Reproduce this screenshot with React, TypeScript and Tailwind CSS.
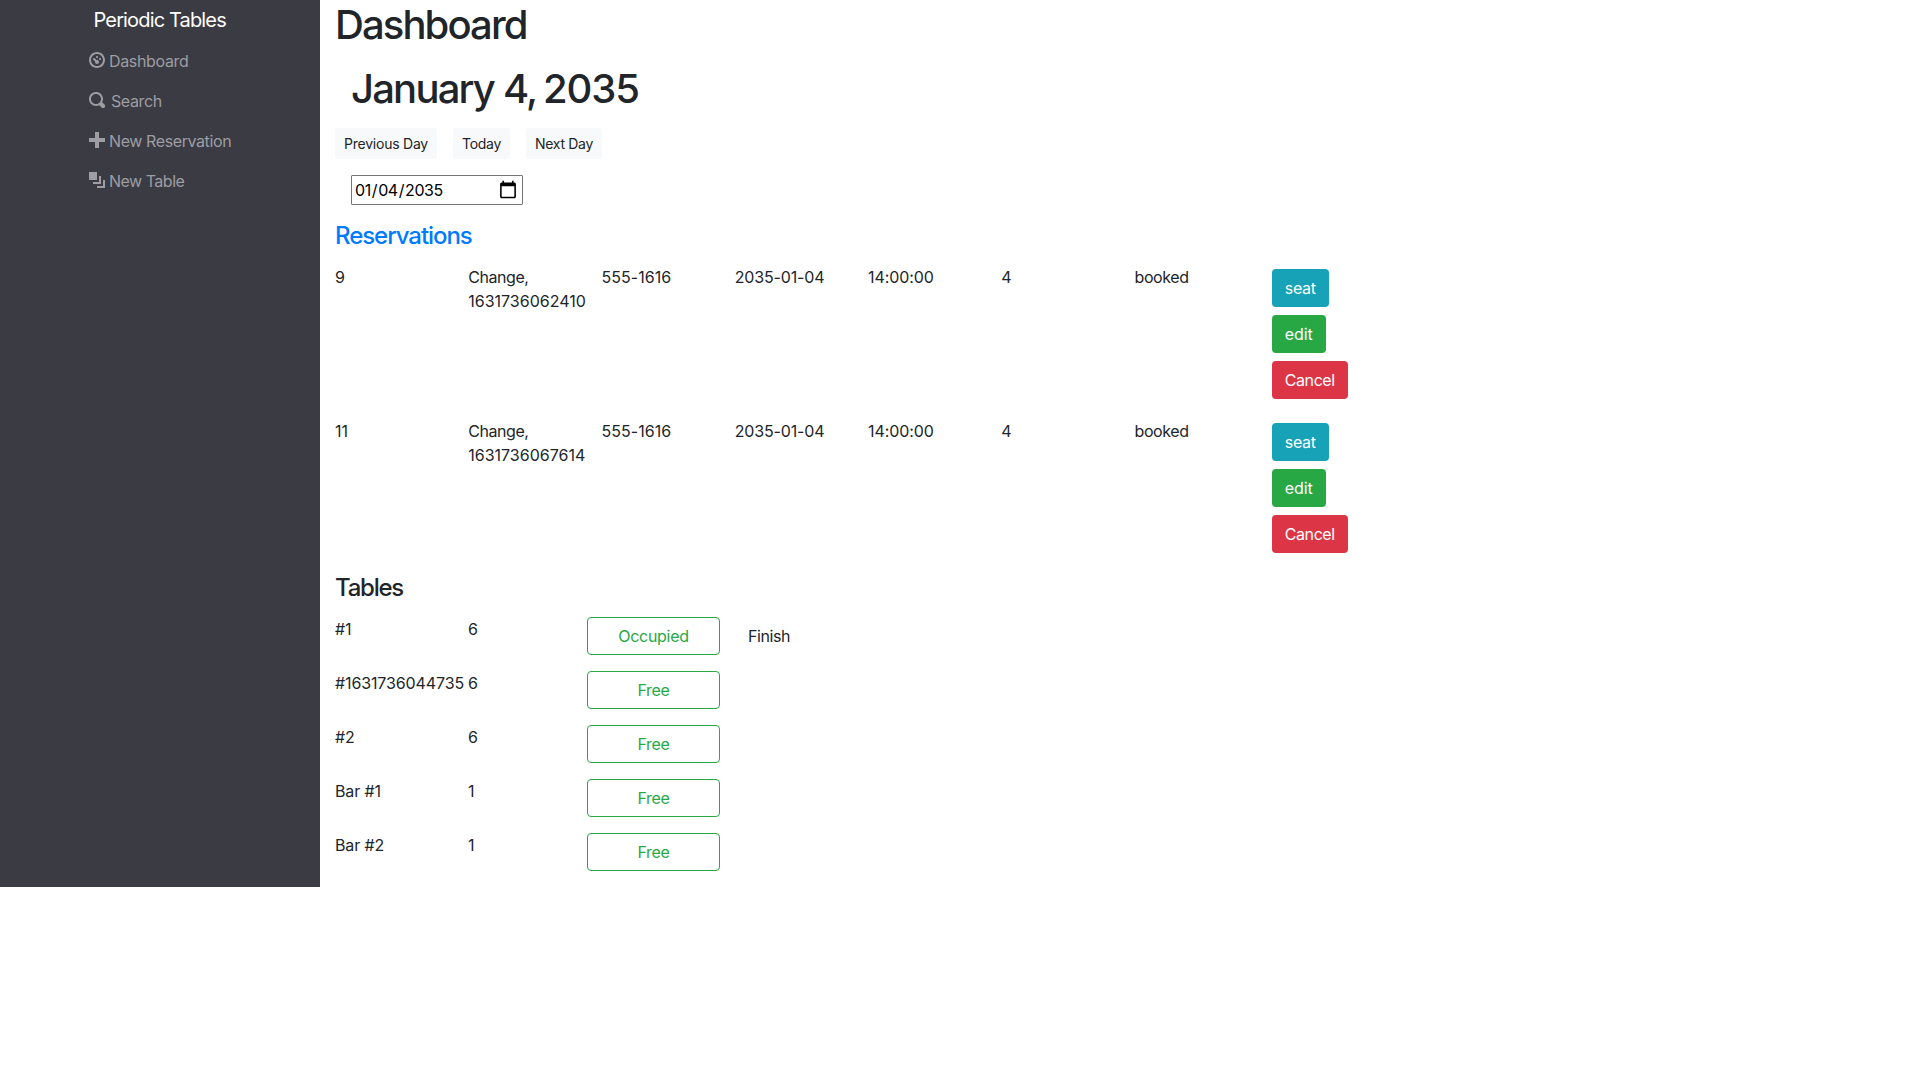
const NAV = [
  {
    label: "Dashboard",
    text: "ml-1 tracking-[-0.34px]",
    d: "M4 0c-2.2 0-4 1.8-4 4s1.8 4 4 4 4-1.8 4-4-1.8-4-4-4zm0 1c1.66 0 3 1.34 3 3s-1.34 3-3 3-3-1.34-3-3 1.34-3 3-3zm0 1c-.28 0-.5.22-.5.5s.22.5.5.5.5-.22.5-.5-.22-.5-.5-.5zm-1.66 1a.5.5 0 0 0-.19.84l.91.91c-.02.08-.06.16-.06.25 0 .55.45 1 1 1s1-.45 1-1-.45-1-1-1c-.09 0-.17.04-.25.06l-.91-.91a.5.5 0 0 0-.44-.16zm3.16 0c-.28 0-.5.22-.5.5s.22.5.5.5.5-.22.5-.5-.22-.5-.5-.5z",
  },
  {
    label: "Search",
    text: "ml-1.5 tracking-[-0.4px]",
    d: "M3.5 0c-1.93 0-3.5 1.57-3.5 3.5s1.57 3.5 3.5 3.5c.59 0 1.17-.14 1.66-.41a1 1 0 0 0 .13.13l1 1a1.02 1.02 0 1 0 1.44-1.44l-1-1a1 1 0 0 0-.16-.13c.27-.49.44-1.06.44-1.66 0-1.93-1.55-3.5-3.5-3.5zm0 1c1.39 0 2.5 1.11 2.5 2.5 0 .66-.24 1.27-.66 1.72-.01.01-.02.02-.03.03a1 1 0 0 0-.13.13c-.44.4-1.04.63-1.69.63-1.39 0-2.5-1.11-2.5-2.5s1.11-2.5 2.5-2.5z",
  },
  {
    label: "New Reservation",
    text: "ml-1 tracking-[-0.4px]",
    d: "M3 0v3h-3v2h3v3h2v-3h3v-2h-3v-3h-2z",
  },
  {
    label: "New Table",
    text: "ml-1 tracking-[-0.5px]",
    d: "M0 0v4h4v-4h-4zm5 2v3h-3v1h4v-4h-1zm2 2v3h-3v1h4v-4h-1z",
  },
];

const RESERVATIONS = [
  { id: "9", last: "Change,", first: "1631736062410" },
  { id: "11", last: "Change,", first: "1631736067614" },
];

const TABLES = [
  { name: "#1", capacity: "6", status: "Occupied" },
  { name: "#1631736044735", capacity: "6", status: "Free" },
  { name: "#2", capacity: "6", status: "Free" },
  { name: "Bar #1", capacity: "1", status: "Free" },
  { name: "Bar #2", capacity: "1", status: "Free" },
];

function Sidebar() {
  return (
    <nav className="w-80 shrink-0 bg-[#3b3b44]">
      <div className="mt-1 ml-[93.5px] h-8 text-xl leading-8 tracking-[-0.85px] text-white">Periodic Tables</div>
      <ul className="mt-1 ml-[89px]">
        {NAV.map((n) => (
          <li key={n.label} className="flex h-10 items-center text-[#9d9da2]">
            <svg viewBox="0 0 8 8" className="size-4 fill-current">
              <path d={n.d} />
            </svg>
            <a className={`pt-0.5 ${n.text}`}>{n.label}</a>
          </li>
        ))}
      </ul>
    </nav>
  );
}

export default function App() {
  return (
    <div className="flex h-[887px] bg-white font-['Inter',sans-serif] text-base text-[#212529]">
      <Sidebar />
      <main className="ml-[15px] w-[1066px]">
        <h1 className="pt-px text-[40px] leading-[48px] font-[530] tracking-[-1.9px]">Dashboard</h1>
        <h1 className="mt-4 ml-4 text-[40px] leading-[48px] font-[530] tracking-[-1.8px]">
          January 4,<span className="ml-[-3px] tracking-[-1.1px]"> 2035</span>
        </h1>
        <div className="mt-[15px] flex gap-4 text-sm">
          <button className="h-[31px] w-[102px] rounded-[3px] bg-[#f8f9fa] tracking-[-0.24px]">Previous Day</button>
          <button className="h-[31px] w-[57px] rounded-[3px] bg-[#f8f9fa] tracking-[-0.3px]">Today</button>
          <button className="h-[31px] w-[76px] rounded-[3px] bg-[#f8f9fa] tracking-[-0.3px]">Next Day</button>
        </div>
        <input
          type="date"
          defaultValue="2035-01-04"
          className="mt-4 ml-4 block h-[30px] w-[172px] rounded-[1px] border border-[#767676] py-px pr-0.5 pl-0.5 tracking-[-0.42px] text-black [&::-webkit-calendar-picker-indicator]:size-5"
        />
        <h4 className="mt-4 text-2xl leading-[29px] font-[530] tracking-[-1.05px] text-[#007bff]">Reservations</h4>
        <div className="mt-[15px]">
          {RESERVATIONS.map((r) => (
            <div key={r.id} className="grid h-[154px] grid-cols-8">
              <div>{r.id}</div>
              <div>
                <div className="tracking-[-0.45px]">{r.last}</div>
                <div>{r.first}</div>
              </div>
              <div className="tracking-[0.05px]">555-1616</div>
              <div className="tracking-[-0.15px]">2035-01-04</div>
              <div className="tracking-[-0.1px]">14:00:00</div>
              <div>4</div>
              <div className="tracking-[-0.4px]">booked</div>
              <div className="flex flex-col items-start gap-2 pt-1 pl-1 text-white">
                <button className="h-[38px] w-[57px] rounded bg-[#17a2b8] tracking-[-0.3px]">seat</button>
                <button className="h-[38px] w-[54px] rounded bg-[#28a745] tracking-[-0.1px]">edit</button>
                <button className="h-[38px] w-[76px] rounded bg-[#dc3545] tracking-[-0.4px]">Cancel</button>
              </div>
            </div>
          ))}
        </div>
        <h4 className="text-2xl leading-[29px] font-[530] tracking-[-1.25px]">Tables</h4>
        <div className="mt-[15px]">
          {TABLES.map((t) => (
            <div key={t.name} className="flex h-[54px] items-start">
              <div className="w-[133px] shrink-0 tracking-[-0.12px]">{t.name}</div>
              <div className="w-[119px] shrink-0">{t.capacity}</div>
              <button className="h-[38px] w-[133px] shrink-0 rounded border border-[#28a745] tracking-[-0.3px] text-[#28a745]">
                {t.status}
              </button>
              {t.status === "Occupied" && (
                <button className="ml-[15px] h-[38px] px-[13px] tracking-[-0.4px]">Finish</button>
              )}
            </div>
          ))}
        </div>
      </main>
    </div>
  );
}
